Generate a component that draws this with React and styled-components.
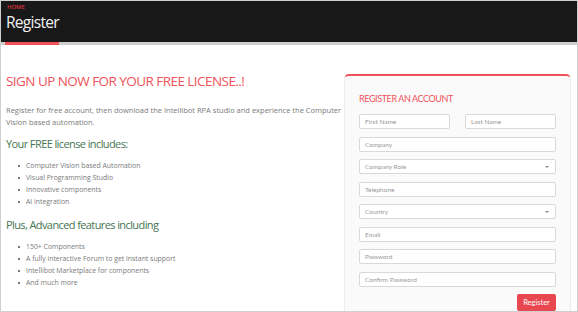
import React from "react";
import styled, { createGlobalStyle } from "styled-components";

const GlobalStyle = createGlobalStyle`
  * { box-sizing: border-box; }
  body {
    margin: 0;
    font-family: "Open Sans", "Liberation Sans", sans-serif;
    background: #fff;
  }
`;

const Page = styled.div`
  width: 578px;
  height: 312px;
  border: 1px solid #cfcfcf;
  overflow: hidden;
  display: flex;
  flex-direction: column;
`;

const Banner = styled.header`
  background: #181818;
  height: 44px;
  padding: 2px 5px 0;
  border-bottom: 3px solid #cdcdcd;
  position: relative;
  flex-shrink: 0;
  &::after {
    content: "";
    position: absolute;
    left: 4px;
    bottom: -3px;
    width: 54px;
    height: 3px;
    background: #f0525a;
  }
`;

const Crumb = styled.div`
  color: #d9313c;
  font-size: 6px;
  font-weight: 600;
  line-height: 8px;
  text-transform: uppercase;
  padding-left: 1px;
  letter-spacing: -0.1px;
`;

const Title = styled.h1`
  margin: 0;
  color: #f2f2f2;
  font-size: 15.5px;
  font-weight: 400;
  line-height: 22px;
  letter-spacing: -0.7px;
`;

const Body = styled.main`
  flex: 1;
  display: grid;
  grid-template-columns: 1fr 227px;
  padding: 27px 6px 0 5px;
  min-height: 0;
`;

const Info = styled.section`
  color: #7a7a7a;
`;

const Headline = styled.h2`
  margin: 0;
  color: #f0525a;
  font-size: 13.5px;
  font-weight: 400;
  line-height: 18px;
  letter-spacing: -0.55px;
`;

const Lead = styled.p`
  margin: 14px 0 0;
  font-size: 7.5px;
  line-height: 12px;
`;

const SubHead = styled.h3`
  margin: ${(p) => (p.$second ? "10px" : "9px")} 0 0;
  color: #467552;
  font-size: 11px;
  font-weight: 400;
  line-height: 14px;
  letter-spacing: -0.6px;
`;

const List = styled.ul`
  margin: 9px 0 0;
  padding-left: 20px;
  list-style: none;
  font-size: 6.9px;
  line-height: 12px;
`;

const Item = styled.li`
  position: relative;
  &::before {
    content: "";
    position: absolute;
    left: -8px;
    top: 5px;
    width: 2px;
    height: 2px;
    background: #777;
  }
`;

const Card = styled.section`
  margin-top: 2px;
  background: #fafafa;
  border: 1px solid #ececec;
  border-top: 2px solid #f0525a;
  border-radius: 5px 5px 0 0;
  padding: 17px 14px 0 14px;
  font-family: Lato, "Open Sans", sans-serif;
`;

const CardTitle = styled.h4`
  margin: 0 0 9px;
  color: #f0525a;
  font-size: 9px;
  font-weight: 400;
  line-height: 12px;
  letter-spacing: -0.4px;
`;

const Fields = styled.div`
  display: grid;
  grid-template-columns: 1fr 1fr;
  column-gap: 15px;
  row-gap: 7.5px;
`;

const Field = styled.div`
  grid-column: ${(p) => (p.$half ? "span 1" : "1 / -1")};
  height: 15px;
  background: #fff;
  border: 1px solid #d9d9d9;
  border-radius: 2px;
  display: flex;
  align-items: center;
  justify-content: space-between;
  padding: 0 6px 0 5px;
  color: #9a9a9a;
  font-size: 6.5px;
`;

const Caret = styled.span`
  width: 0;
  height: 0;
  border-left: 2px solid transparent;
  border-right: 2px solid transparent;
  border-top: 2px solid #888;
`;

const Actions = styled.div`
  display: flex;
  justify-content: flex-end;
  margin-top: 7px;
`;

const Button = styled.button`
  background: #e9474f;
  color: #fff;
  border: none;
  border-radius: 2px;
  height: 17px;
  width: 39px;
  padding: 0;
  font-family: Lato, "Open Sans", sans-serif;
  font-size: 7.5px;
`;

const freeItems = [
  "Computer Vision based Automation",
  "Visual Programming Studio",
  "Innovative components",
  "AI integration",
];

const advancedItems = [
  "150+ Components",
  "A fully interactive Forum to get instant support",
  "Intellibot Marketplace for components",
  "And much more",
];

const fields = [
  { label: "First Name", half: true },
  { label: "Last Name", half: true },
  { label: "Company" },
  { label: "Company Role", select: true },
  { label: "Telephone" },
  { label: "Country", select: true },
  { label: "Email" },
  { label: "Password" },
  { label: "Confirm Password" },
];

export default function App() {
  return (
    <Page>
      <GlobalStyle />
      <Banner>
        <Crumb>Home</Crumb>
        <Title>Register</Title>
      </Banner>
      <Body>
        <Info>
          <Headline>SIGN UP NOW FOR YOUR FREE LICENSE..!</Headline>
          <Lead>
            Register for free account, then download the Intellibot RPA studio
            and experience the Computer Vision based automation.
          </Lead>
          <SubHead>Your FREE license includes:</SubHead>
          <List>
            {freeItems.map((item) => (
              <Item key={item}>{item}</Item>
            ))}
          </List>
          <SubHead $second>Plus, Advanced features including</SubHead>
          <List>
            {advancedItems.map((item) => (
              <Item key={item}>{item}</Item>
            ))}
          </List>
        </Info>
        <Card>
          <CardTitle>REGISTER AN ACCOUNT</CardTitle>
          <Fields>
            {fields.map((f) => (
              <Field key={f.label} $half={f.half}>
                {f.label}
                {f.select && <Caret />}
              </Field>
            ))}
          </Fields>
          <Actions>
            <Button>Register</Button>
          </Actions>
        </Card>
      </Body>
    </Page>
  );
}
